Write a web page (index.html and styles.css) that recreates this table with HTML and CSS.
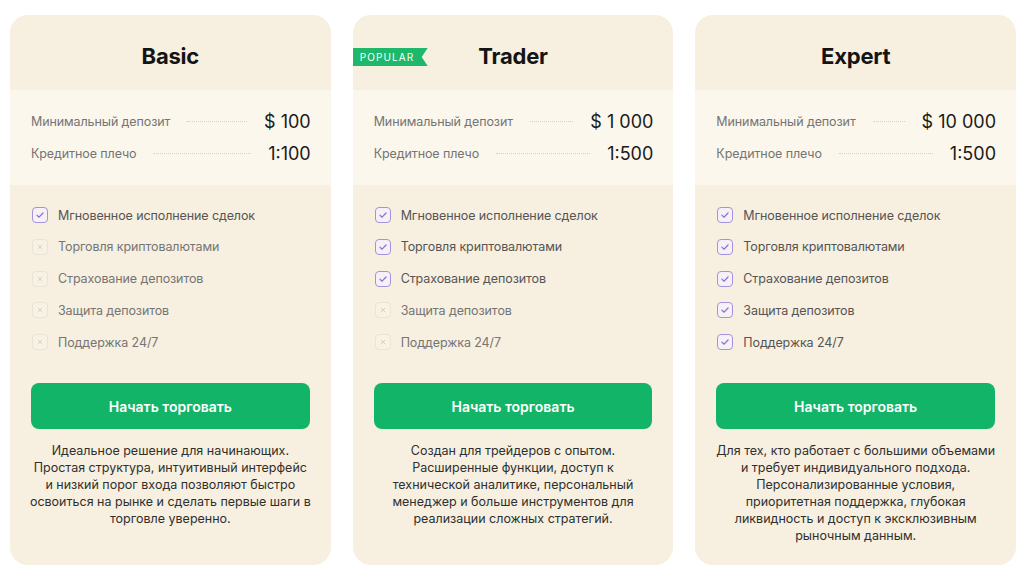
FILE: index.html
```html
<!DOCTYPE html>
<html lang="ru">
<head>
<meta charset="utf-8">
<title>Тарифы</title>
<link rel="stylesheet" href="styles.css">
</head>
<body>
<div class="plans">
  <div class="card">
    <div class="head"><h2 class="title">Basic</h2></div>
    <div class="info">
      <div class="row"><span class="lbl">Минимальный депозит</span><span class="dots"></span><span class="val">$ 100</span></div>
      <div class="row"><span class="lbl">Кредитное плечо</span><span class="dots"></span><span class="val">1:100</span></div>
    </div>
    <div class="body">
      <ul class="feats">
        <li class="on"><span class="box"><svg viewBox="0 0 16 16"><path d="M4.5 8.2l2.4 2.3 4.6-4.8"/></svg></span>Мгновенное исполнение сделок</li>
        <li class="off"><span class="box"><svg viewBox="0 0 16 16"><path d="M5.8 5.8l4.4 4.4M10.2 5.8l-4.4 4.4"/></svg></span>Торговля криптовалютами</li>
        <li class="off"><span class="box"><svg viewBox="0 0 16 16"><path d="M5.8 5.8l4.4 4.4M10.2 5.8l-4.4 4.4"/></svg></span>Страхование депозитов</li>
        <li class="off"><span class="box"><svg viewBox="0 0 16 16"><path d="M5.8 5.8l4.4 4.4M10.2 5.8l-4.4 4.4"/></svg></span>Защита депозитов</li>
        <li class="off"><span class="box"><svg viewBox="0 0 16 16"><path d="M5.8 5.8l4.4 4.4M10.2 5.8l-4.4 4.4"/></svg></span>Поддержка 24/7</li>
      </ul>
      <button class="btn">Начать торговать</button>
      <p class="desc">Идеальное решение для начинающих.<br>Простая структура, интуитивный интерфейс<br>и низкий порог входа позволяют быстро<br>освоиться на рынке и сделать первые шаги в<br>торговле уверенно.</p>
    </div>
  </div>

  <div class="card">
    <span class="badge">POPULAR</span>
    <div class="head"><h2 class="title">Trader</h2></div>
    <div class="info">
      <div class="row"><span class="lbl">Минимальный депозит</span><span class="dots"></span><span class="val">$ 1 000</span></div>
      <div class="row"><span class="lbl">Кредитное плечо</span><span class="dots"></span><span class="val">1:500</span></div>
    </div>
    <div class="body">
      <ul class="feats">
        <li class="on"><span class="box"><svg viewBox="0 0 16 16"><path d="M4.5 8.2l2.4 2.3 4.6-4.8"/></svg></span>Мгновенное исполнение сделок</li>
        <li class="on"><span class="box"><svg viewBox="0 0 16 16"><path d="M4.5 8.2l2.4 2.3 4.6-4.8"/></svg></span>Торговля криптовалютами</li>
        <li class="on"><span class="box"><svg viewBox="0 0 16 16"><path d="M4.5 8.2l2.4 2.3 4.6-4.8"/></svg></span>Страхование депозитов</li>
        <li class="off"><span class="box"><svg viewBox="0 0 16 16"><path d="M5.8 5.8l4.4 4.4M10.2 5.8l-4.4 4.4"/></svg></span>Защита депозитов</li>
        <li class="off"><span class="box"><svg viewBox="0 0 16 16"><path d="M5.8 5.8l4.4 4.4M10.2 5.8l-4.4 4.4"/></svg></span>Поддержка 24/7</li>
      </ul>
      <button class="btn">Начать торговать</button>
      <p class="desc">Создан для трейдеров с опытом.<br>Расширенные функции, доступ к<br>технической аналитике, персональный<br>менеджер и больше инструментов для<br>реализации сложных стратегий.</p>
    </div>
  </div>

  <div class="card">
    <div class="head"><h2 class="title">Expert</h2></div>
    <div class="info">
      <div class="row"><span class="lbl">Минимальный депозит</span><span class="dots"></span><span class="val">$ 10 000</span></div>
      <div class="row"><span class="lbl">Кредитное плечо</span><span class="dots"></span><span class="val">1:500</span></div>
    </div>
    <div class="body">
      <ul class="feats">
        <li class="on"><span class="box"><svg viewBox="0 0 16 16"><path d="M4.5 8.2l2.4 2.3 4.6-4.8"/></svg></span>Мгновенное исполнение сделок</li>
        <li class="on"><span class="box"><svg viewBox="0 0 16 16"><path d="M4.5 8.2l2.4 2.3 4.6-4.8"/></svg></span>Торговля криптовалютами</li>
        <li class="on"><span class="box"><svg viewBox="0 0 16 16"><path d="M4.5 8.2l2.4 2.3 4.6-4.8"/></svg></span>Страхование депозитов</li>
        <li class="on"><span class="box"><svg viewBox="0 0 16 16"><path d="M4.5 8.2l2.4 2.3 4.6-4.8"/></svg></span>Защита депозитов</li>
        <li class="on"><span class="box"><svg viewBox="0 0 16 16"><path d="M4.5 8.2l2.4 2.3 4.6-4.8"/></svg></span>Поддержка 24/7</li>
      </ul>
      <button class="btn">Начать торговать</button>
      <p class="desc">Для тех, кто работает с большими объемами<br>и требует индивидуального подхода.<br>Персонализированные условия,<br>приоритетная поддержка, глубокая<br>ликвидность и доступ к эксклюзивным<br>рыночным данным.</p>
    </div>
  </div>
</div>
</body>
</html>
```

FILE: styles.css
```css
* { box-sizing: border-box; }
html, body { margin: 0; padding: 0; }
body {
  background: #ffffff;
  font-family: Inter, "Noto Sans", "Liberation Sans", sans-serif;
  color: #222;
  width: 1024px;
  height: 575px;
  overflow: hidden;
}
.plans {
  display: flex;
  gap: 22px;
  padding: 15px 8px 10px 10px;
}
.card {
  position: relative;
  width: 321px;
  height: 550px;
  background: #f7efdf;
  border-radius: 18px;
  overflow: hidden;
  display: flex;
  flex-direction: column;
}
.head {
  height: 75px;
  display: flex;
  justify-content: center;
  padding-top: 27px;
}
.title {
  margin: 0;
  font-size: 22px;
  line-height: 28px;
  font-weight: 700;
  color: #141414;
  letter-spacing: -0.2px;
}
.badge {
  position: absolute;
  left: 0;
  top: 33px;
  height: 18px;
  width: 75px;
  background: #1db86a;
  color: #fff;
  font-size: 10px;
  line-height: 18px;
  letter-spacing: 1.1px;
  padding-left: 7px;
  clip-path: polygon(0 0, 100% 0, 92% 50%, 100% 100%, 0 100%);
}
.info {
  height: 95px;
  background: #fcf7ec;
  padding: 18px 20px 0 21px;
  display: flex;
  flex-direction: column;
  gap: 6px;
}
.row {
  height: 26px;
  display: flex;
  align-items: center;
}
.lbl {
  font-size: 12.5px;
  color: #747474;
  white-space: nowrap;
  letter-spacing: -0.1px;
}
.dots {
  flex: 1;
  margin: 0 17px;
  border-top: 1px dotted #d9d2c4;
  height: 0;
}
.val {
  font-size: 18px;
  font-weight: 400;
  color: #1a1a1a;
  white-space: nowrap;
}
.body {
  flex: 1;
  padding: 20px 21px 0 21px;
  display: flex;
  flex-direction: column;
}
.feats {
  list-style: none;
  margin: 0 0 31px 0;
  padding: 0 0 0 1px;
  display: flex;
  flex-direction: column;
  gap: 11.75px;
}
.feats li {
  height: 20px;
  display: flex;
  align-items: center;
  gap: 10px;
  font-size: 12.5px;
  letter-spacing: -0.1px;
  color: #555;
}
.feats li.off { color: #757575; }
.box {
  width: 16px;
  height: 16px;
  border-radius: 4px;
  border: 1.4px solid #a592dc;
  background: #f6f1f6;
  display: flex;
  align-items: center;
  justify-content: center;
}
.box svg {
  width: 16px;
  height: 16px;
  fill: none;
  stroke: #8a6fd6;
  stroke-width: 1.4;
  stroke-linecap: round;
  stroke-linejoin: round;
}
.off .box {
  border-color: #ebe3d3;
  background: #f8f2e4;
}
.off .box svg {
  stroke: #d6cfc2;
  stroke-width: 1.1;
}
.btn {
  height: 46px;
  border: 0;
  border-radius: 8px;
  background: #12b568;
  color: #fff;
  font-family: inherit;
  font-size: 14px;
  font-weight: 600;
  cursor: pointer;
}
.desc {
  margin: 13px -8px 0 -8px;
  font-size: 12.5px;
  line-height: 17px;
  color: #2f2f2f;
  text-align: center;
  white-space: nowrap;
}
```
